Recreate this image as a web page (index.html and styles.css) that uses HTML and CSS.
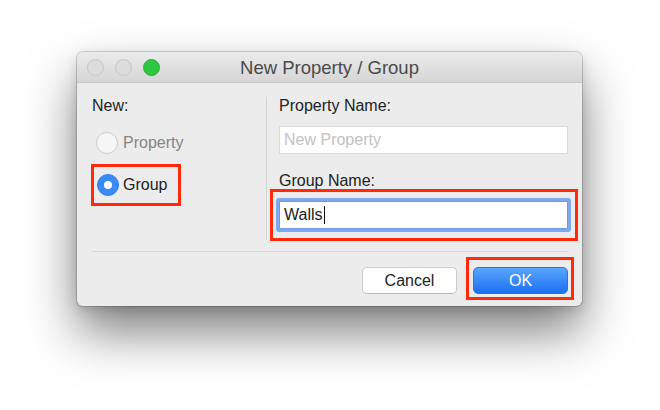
FILE: index.html
```html
<!DOCTYPE html>
<html>
<head>
<meta charset="utf-8">
<link rel="stylesheet" href="styles.css">
</head>
<body>
<div class="window">
  <div class="titlebar">
    <div class="lights">
      <span class="light light-off"></span>
      <span class="light light-off"></span>
      <span class="light light-green"></span>
    </div>
    <div class="title">New Property / Group</div>
  </div>
  <div class="content">
    <div class="panes">
      <div class="pane-left">
        <div class="label">New:</div>
        <div class="radio-row radio-row-property">
          <span class="radio radio-off"></span>
          <span class="radio-text radio-text-dim">Property</span>
        </div>
        <div class="highlight highlight-group">
          <span class="radio radio-on"></span>
          <span class="radio-text">Group</span>
        </div>
      </div>
      <div class="pane-right">
        <div class="label">Property Name:</div>
        <div class="field field-disabled">New Property</div>
        <div class="label label-group">Group Name:</div>
        <div class="highlight highlight-field">
          <div class="field field-focused">Walls<span class="caret"></span></div>
        </div>
      </div>
    </div>
    <div class="separator"></div>
    <div class="buttons">
      <div class="button button-cancel">Cancel</div>
      <div class="highlight highlight-ok">
        <div class="button button-ok">OK</div>
      </div>
    </div>
  </div>
</div>
</body>
</html>
```

FILE: styles.css
```css
html, body {
  margin: 0;
  padding: 0;
  background: #ffffff;
}

body {
  width: 660px;
  height: 410px;
  overflow: hidden;
  font-family: "Liberation Sans", Arial, sans-serif;
  color: #222222;
}

.window {
  width: 505px;
  height: 254px;
  margin: 52px 0 0 77px;
  box-sizing: border-box;
  background: #ececec;
  border-radius: 6px;
  box-shadow: 0 0 0 1px rgba(0, 0, 0, 0.16), 0 26px 50px rgba(0, 0, 0, 0.5), 0 4px 12px rgba(0, 0, 0, 0.14);
  display: flex;
  flex-direction: column;
}

.titlebar {
  height: 30px;
  border-bottom: 1px solid #c6c6c6;
  border-radius: 6px 6px 0 0;
  background: linear-gradient(#ebebeb, #d6d6d6);
  display: flex;
  align-items: center;
  position: relative;
}

.lights {
  display: flex;
  gap: 11px;
  padding-left: 10px;
  padding-top: 1px;
}

.light {
  width: 17px;
  height: 17px;
  border-radius: 50%;
  box-sizing: border-box;
}

.light-off {
  background: #dcdcdc;
  border: 1px solid #c6c6c6;
}

.light-green {
  background: #2bc840;
  border: 1px solid #22b336;
}

.title {
  position: absolute;
  left: 0;
  right: 0;
  top: 0;
  bottom: 0;
  display: flex;
  align-items: center;
  justify-content: center;
  font-size: 18.5px;
  color: #4a4a4a;
  pointer-events: none;
  padding-top: 1px;
}

.content {
  padding: 0 14px 0 15px;
  display: flex;
  flex-direction: column;
}

.panes {
  display: flex;
  margin-top: 14px;
  height: 143px;
}

.pane-left {
  width: 174px;
  border-right: 1px solid #d4d4d4;
  display: flex;
  flex-direction: column;
  align-items: flex-start;
}

.pane-right {
  flex: 1;
  padding-left: 12px;
  display: flex;
  flex-direction: column;
}

.label {
  font-size: 16px;
  line-height: 18px;
  height: 18px;
}

.label-group {
  margin-top: 18px;
}

.radio-row {
  display: flex;
  align-items: center;
  gap: 5px;
}

.radio-row-property {
  margin-top: 17px;
  margin-left: 4px;
}

.radio {
  width: 22px;
  height: 22px;
  border-radius: 50%;
  box-sizing: border-box;
  flex: none;
}

.radio-off {
  background: #f6f6f6;
  border: 1px solid #cdcdcd;
}

.radio-on {
  background: #3a8bf8;
  border: 1px solid #2f7ff0;
  display: flex;
  align-items: center;
  justify-content: center;
}

.radio-on::after {
  content: "";
  width: 8px;
  height: 8px;
  border-radius: 50%;
  background: #ffffff;
}

.radio-text {
  font-size: 16px;
  line-height: 18px;
}

.radio-text-dim {
  color: #858585;
}

.highlight {
  border: 3px solid #ff2a0a;
  box-sizing: border-box;
}

.highlight-group {
  display: flex;
  align-items: center;
  gap: 4px;
  width: 90px;
  height: 42px;
  margin-top: 10px;
  margin-left: -1px;
  padding-left: 3px;
}

.field {
  height: 28px;
  box-sizing: border-box;
  background: #ffffff;
  font-size: 16px;
  line-height: 26px;
  padding-left: 4px;
  display: flex;
  align-items: center;
}

.field-disabled {
  margin-top: 11px;
  border: 1px solid #d9d9d9;
  color: #c2c2c2;
}

.highlight-field {
  margin: -1px -10px 0 -9px;
  padding: 9px 7px 9px 6px;
}

.field-focused {
  border: 1px solid #6f9be6;
  box-shadow: 0 0 0 3px #7fa8ef;
  border-radius: 1px;
  color: #1a1a1a;
}

.caret {
  display: inline-block;
  width: 1px;
  height: 18px;
  background: #111111;
  margin-left: 1px;
}

.separator {
  height: 1px;
  background: #d6d6d6;
  margin-top: 11px;
}

.buttons {
  display: flex;
  justify-content: flex-end;
  align-items: flex-start;
  margin-top: 15px;
}

.button {
  width: 95px;
  height: 27px;
  box-sizing: border-box;
  border-radius: 5px;
  font-size: 16px;
  display: flex;
  align-items: center;
  justify-content: center;
}

.button-cancel {
  background: #ffffff;
  border: 1px solid #cbcbcb;
  border-bottom-color: #b9b9b9;
  color: #222222;
}

.highlight-ok {
  margin: -10px -6px 0 9px;
  padding: 7px 3px 3px 4px;
}

.button-ok {
  background: linear-gradient(#58a6fc, #1d70f4);
  border: 1px solid #2a72e6;
  color: #ffffff;
}
```
